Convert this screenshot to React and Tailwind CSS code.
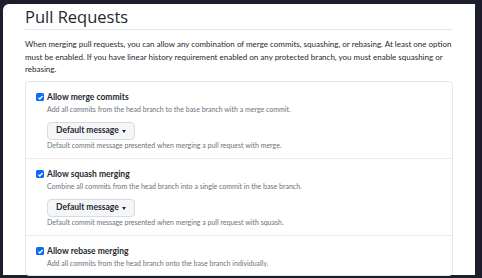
import React from "react";

const Check = () => (
  <span className="flex h-[8px] w-[8px] shrink-0 items-center justify-center rounded-[1.5px] bg-[#0a6cf0]">
    <svg viewBox="0 0 10 10" className="h-[7px] w-[7px]">
      <path d="M2 5.2l2 2 4-4.4" fill="none" stroke="white" strokeWidth="1.8" />
    </svg>
  </span>
);

const MessageButton = () => (
  <button className="mt-[8px] flex h-[18px] items-center rounded-[4px] border border-[#d8dce0] bg-[#f5f6f8] px-[8px] text-[8.5px] font-bold text-[#24292f]">
    Default message
    <span className="ml-[3px] mt-[1px] h-0 w-0 border-x-[2.5px] border-t-[3px] border-x-transparent border-t-[#24292f]" />
  </button>
);

const Option = ({ title, desc, hint, last }) => (
  <div className={"px-[10px] pt-[10px] " + (last ? "pb-[7px]" : "pb-[8px] border-b border-[#e8eaed]")}>
    <div className="flex items-center gap-[3px] leading-[11px]">
      <Check />
      <span className="text-[8.5px] font-bold text-[#24292f]">{title}</span>
    </div>
    <div className="pl-[11px]">
      <p className="mt-[2px] text-[7px] leading-[9px] text-[#6a737d]">{desc}</p>
      {hint && (
        <>
          <MessageButton />
          <p className="mt-[1px] text-[7px] leading-[9px] text-[#6a737d]">{hint}</p>
        </>
      )}
    </div>
  </div>
);

export default function App() {
  return (
    <div
      className="h-[278px] w-[482px] bg-[#1c1f2b] pb-[3px] pl-[3px] pr-[7px] pt-[4px]"
      style={{ fontFamily: 'Lato, "Open Sans", sans-serif' }}
    >
      <div className="h-full rounded-tl-[6px] bg-white px-[22px]">
        <h2
          className="border-b border-[#e3e5e8] pb-[2px] pt-[3px] text-[16.5px] leading-[20px] text-[#24292f]"
          style={{ fontFamily: '"Open Sans", sans-serif' }}
        >
          Pull Requests
        </h2>
        <p className="mt-[8px] text-[8px] leading-[12.5px] text-[#24292f]">
          When merging pull requests, you can allow any combination of merge commits, squashing, or rebasing. At least one option
          must be enabled. If you have linear history requirement enabled on any protected branch, you must enable squashing or
          rebasing.
        </p>
        <div className="mt-[5px] rounded-[4px] border border-[#e3e5e8]">
          <Option
            title="Allow merge commits"
            desc="Add all commits from the head branch to the base branch with a merge commit."
            hint="Default commit message presented when merging a pull request with merge."
          />
          <Option
            title="Allow squash merging"
            desc="Combine all commits from the head branch into a single commit in the base branch."
            hint="Default commit message presented when merging a pull request with squash."
          />
          <Option
            title="Allow rebase merging"
            desc="Add all commits from the head branch onto the base branch individually."
            last
          />
        </div>
      </div>
    </div>
  );
}
